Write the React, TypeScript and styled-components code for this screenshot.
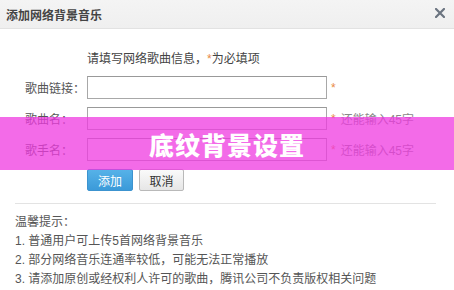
import { createGlobalStyle } from 'styled-components';
import styled from 'styled-components';

const GlobalStyle = createGlobalStyle`
  html, body {
    margin: 0;
    padding: 0;
    background: #ffffff;
  }
  body {
    font-family: "Liberation Sans", "Noto Sans CJK SC", sans-serif;
    font-size: 12px;
    color: #555;
  }
`;

interface Field {
  label: string;
  hint?: string;
}

const FIELDS: Field[] = [
  { label: '歌曲链接：' },
  { label: '歌曲名：', hint: '还能输入45字' },
  { label: '歌手名：', hint: '还能输入45字' },
];

const TIPS = [
  '1. 普通用户可上传5首网络背景音乐',
  '2. 部分网络音乐连通率较低，可能无法正常播放',
  '3. 请添加原创或经权利人许可的歌曲，腾讯公司不负责版权相关问题',
];

function CloseIcon() {
  return (
    <svg width="10" height="10" viewBox="0 0 10 10">
      <path
        d="M1 1 L9 9 M9 1 L1 9"
        stroke="#6b7480"
        strokeWidth="2.2"
        strokeLinecap="square"
      />
    </svg>
  );
}

function App() {
  return (
    <>
      <GlobalStyle />
      <StyledDialog>
        <StyledHeader>
          <StyledTitle>添加网络背景音乐</StyledTitle>
          <StyledClose>
            <CloseIcon />
          </StyledClose>
        </StyledHeader>

        <StyledForm>
          <StyledIntro>
            请填写网络歌曲信息，<StyledStar>*</StyledStar>为必填项
          </StyledIntro>

          {FIELDS.map((field) => (
            <StyledRow key={field.label}>
              <StyledLabel>{field.label}</StyledLabel>
              <StyledInput />
              <StyledStar $gap>*</StyledStar>
              {field.hint && <StyledHint>{field.hint}</StyledHint>}
            </StyledRow>
          ))}

          <StyledButtons>
            <StyledButton $primary>添加</StyledButton>
            <StyledButton>取消</StyledButton>
          </StyledButtons>
        </StyledForm>

        <StyledDivider />

        <StyledTips>
          <div>温馨提示：</div>
          {TIPS.map((tip) => (
            <div key={tip}>{tip}</div>
          ))}
        </StyledTips>

        <StyledBanner>底纹背景设置</StyledBanner>
      </StyledDialog>
    </>
  );
}

export default App;

const StyledDialog = styled('div')({
  position: 'relative',
  width: '454px',
  height: '290px',
  overflow: 'hidden',
  background: '#fff',
});

const StyledHeader = styled('div')({
  height: '28px',
  display: 'flex',
  alignItems: 'center',
  justifyContent: 'space-between',
  padding: '0 9px 0 6px',
  background: 'linear-gradient(#f4f4f4, #efefef)',
  borderBottom: '1px solid #e2e2e2',
});

const StyledTitle = styled('div')({
  fontFamily: '"Noto Sans CJK SC", sans-serif',
  fontSize: '12px',
  fontWeight: 700,
  color: '#444',
  marginTop: '1px',
});

const StyledClose = styled('div')({
  display: 'flex',
  alignItems: 'center',
  marginTop: '-2px',
});

const StyledForm = styled('div')({
  padding: '22px 0 0 25px',
  display: 'flex',
  flexDirection: 'column',
});

const StyledIntro = styled('div')({
  paddingLeft: '62px',
  lineHeight: '16px',
  color: '#444',
  marginBottom: '9px',
});

const StyledStar = styled('span')<{ $gap?: boolean }>(({ $gap }) => ({
  color: '#e98a45',
  marginLeft: $gap ? '4px' : 0,
  marginRight: $gap ? '4px' : 0,
}));

const StyledRow = styled('div')({
  display: 'flex',
  alignItems: 'center',
  height: '23px',
  marginBottom: '8px',
});

const StyledLabel = styled('div')({
  width: '62px',
  color: '#555',
});

const StyledInput = styled('div')({
  boxSizing: 'border-box',
  width: '240px',
  height: '23px',
  border: '1px solid #a8a8a8',
  borderTopColor: '#999',
  background: '#fff',
});

const StyledHint = styled('span')({
  color: '#888',
  marginLeft: '1px',
});

const StyledButtons = styled('div')({
  display: 'flex',
  gap: '6px',
  paddingLeft: '62px',
});

const StyledButton = styled('div')<{ $primary?: boolean }>(({ $primary }) => ({
  boxSizing: 'border-box',
  width: $primary ? '46px' : '45px',
  height: '22px',
  display: 'flex',
  alignItems: 'center',
  justifyContent: 'center',
  borderRadius: '2px',
  border: $primary ? '1px solid #3c93cf' : '1px solid #b9b9b9',
  background: $primary
    ? 'linear-gradient(#56b2e8, #3b9ad9)'
    : 'linear-gradient(#fafafa, #e6e6e6)',
  color: $primary ? '#fff' : '#333',
}));

const StyledDivider = styled('div')({
  margin: '12px 18px 0 15px',
  borderTop: '1px solid #e3e3e3',
});

const StyledTips = styled('div')({
  padding: '9px 0 0 15px',
  lineHeight: '19px',
  color: '#555',
});

const StyledBanner = styled('div')({
  position: 'absolute',
  left: 0,
  right: 0,
  top: '117px',
  height: '53px',
  display: 'flex',
  alignItems: 'center',
  justifyContent: 'center',
  background: 'rgba(239, 58, 224, 0.75)',
  color: '#fff',
  fontFamily: '"Noto Sans CJK SC", sans-serif',
  fontSize: '25px',
  fontWeight: 900,
  letterSpacing: '1px',
});
